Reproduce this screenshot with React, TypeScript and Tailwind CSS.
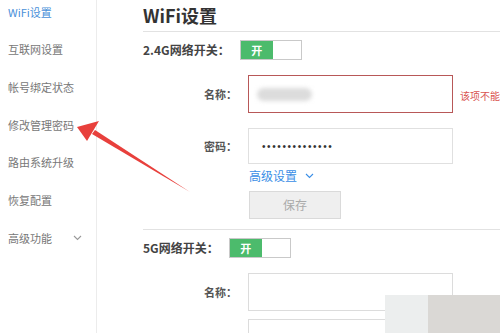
import React from 'react';

const menu = ['WiFi设置', '互联网设置', '帐号绑定状态', '修改管理密码', '路由系统升级', '恢复配置', '高级功能'];

const Toggle: React.FC = () => (
  <div className="flex h-[20px] w-[62px] border border-[#c9c9c9]">
    <div className="flex w-[32px] items-center justify-center bg-[#4cbb6c] text-[11px] font-bold text-white">开</div>
    <div className="flex-1 bg-white" />
  </div>
);

const Field: React.FC<{ label?: string; className?: string; children?: React.ReactNode; inputClass?: string }> = ({
  label,
  className = '',
  children,
  inputClass = '',
}) => (
  <div className={`flex items-center ${className}`}>
    <span className="w-[95px] pr-[1px] text-right text-[11px] font-bold text-[#555]">{label}</span>
    <div className={`ml-[10px] flex h-full w-[205px] shrink-0 items-center bg-white ${inputClass}`}>{children}</div>
  </div>
);

export default function App() {
  return (
    <div
      className="relative flex h-[333px] w-[500px] overflow-hidden bg-white"
      style={{ fontFamily: '"Noto Sans CJK SC", "Noto Sans", sans-serif' }}
    >
      {/* sidebar */}
      <div className="w-[97px] shrink-0 border-r border-[#ececec] pl-[8px]">
        {menu.map((m, i) => (
          <div
            key={m}
            className={`flex h-[37.7px] items-center text-[11px] ${i === 0 ? 'mt-[-7px] text-[#4a90d9]' : 'text-[#777]'}`}
          >
            <span>{m}</span>
            {i === 6 && (
              <svg className="ml-[21px]" width="9" height="6" viewBox="0 0 9 6">
                <path d="M1 1l3.5 3.5L8 1" fill="none" stroke="#999" strokeWidth="1.1" />
              </svg>
            )}
          </div>
        ))}
      </div>

      {/* main */}
      <div className="flex-1 pl-[46px]">
        <div className="flex h-[32px] items-center border-b border-[#e2e2e2] text-[18px] font-bold text-[#333]">
          WiFi设置
        </div>

        <div className="mt-[8px] flex h-[20px] items-center">
          <span className="mr-[10px] text-[12px] font-bold text-[#444]">2.4G网络开关：</span>
          <Toggle />
        </div>

        <div className="relative">
          <Field label="名称：" className="mt-[15px] h-[38px]" inputClass="border-[1.5px] border-[#b85858]">
            <div className="ml-[8px] h-[13px] w-[55px] rounded-full bg-[#dcdcdc] blur-[2px]" />
          </Field>
          <span className="absolute left-[317px] top-[13px] whitespace-nowrap text-[10px] text-[#d9534f]">该项不能为空</span>
        </div>

        <Field label="密码：" className="mt-[15px] h-[36px]" inputClass="border border-[#e0e0e0]">
          <span className="ml-[13px] font-['Liberation_Sans',sans-serif] text-[10px] tracking-[1.6px] text-[#333]">
            ••••••••••••••
          </span>
        </Field>

        <div className="mt-[4px] ml-[106px] flex h-[16px] items-center text-[12px] text-[#3a8ee6]">
          高级设置
          <svg className="ml-[8px]" width="9" height="6" viewBox="0 0 9 6">
            <path d="M1 1l3.5 3.5L8 1" fill="none" stroke="#3a8ee6" strokeWidth="1.1" />
          </svg>
        </div>

        <div className="mt-[7px] ml-[106px] flex h-[28px] w-[92px] items-center justify-center border border-[#dadada] bg-[#efefef] text-[12px] text-[#aaa]">
          保存
        </div>

        <div className="mt-[10px] border-t border-[#e2e2e2]" />

        <div className="mt-[8px] flex h-[20px] items-center">
          <span className="mr-[10px] text-[12px] font-bold text-[#444]">5G网络开关：</span>
          <Toggle />
        </div>

        <Field label="名称：" className="mt-[15px] h-[38px]" inputClass="border border-[#dcdcdc]" />
        <Field className="mt-[8px] h-[38px]" inputClass="border border-[#dcdcdc]" />
      </div>

      {/* red arrow annotation */}
      <svg className="absolute left-0 top-0" width="500" height="333" viewBox="0 0 500 333">
        <path d="M190 192 L92 134 L95 130 Z" fill="#e8403c" />
        <path d="M77 127 L99 121 L93 131 L87 141 Z" fill="#e8403c" />
      </svg>

      {/* watermark blocks */}
      <div className="absolute bottom-0 right-0 flex h-[38px] w-[115px]">
        <div className="w-[43px] bg-[#eceeee]" />
        <div className="flex-1 bg-[#dad8d5]" />
      </div>
    </div>
  );
}
